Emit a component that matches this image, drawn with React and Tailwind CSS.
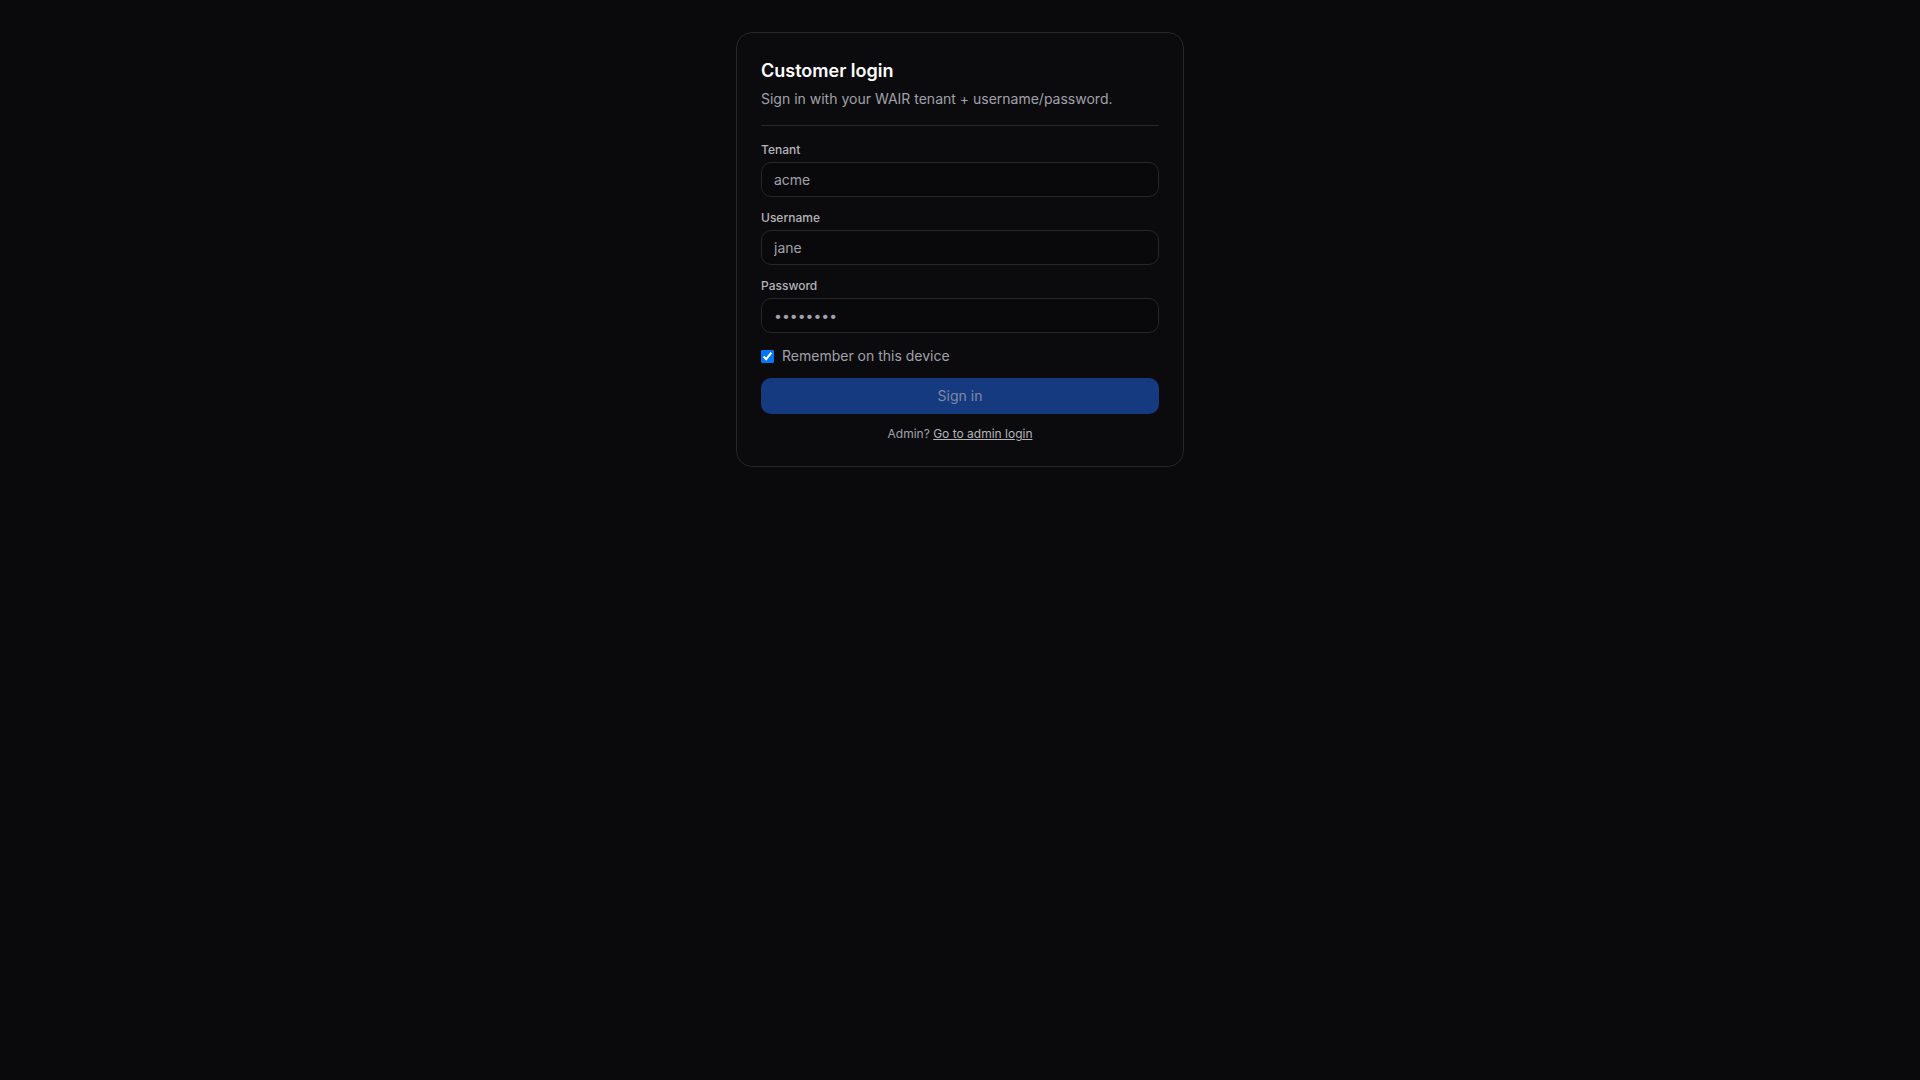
export default function App() {
    const fields = [
        { id: "tenant", label: "Tenant", type: "text", value: "acme" },
        { id: "username", label: "Username", type: "text", value: "jane" },
        { id: "password", label: "Password", type: "password", value: "password" },
    ];

    return (
        <div className="min-h-screen bg-[#0a0a0c] pt-8 font-['Inter',_'Liberation_Sans',_sans-serif] text-[#e4e4e7]">
            <div className="mx-auto w-[448px] rounded-2xl border border-[#27272a] bg-[#0b0b0d] p-6">
                {/* Header */}
                <div className="border-b border-[#27272a] pb-4">
                    <h1 className="text-lg font-semibold leading-7 text-white">Customer login</h1>
                    <p className="mt-1 text-sm leading-5 text-[#a1a1aa]">
                        Sign in with your WAIR tenant + username/password.
                    </p>
                </div>

                <form className="mt-[14px] flex flex-col" onSubmit={(e) => e.preventDefault()}>
                    <div className="flex flex-col gap-[11px]">
                        {fields.map((f) => (
                            <div key={f.id}>
                                <label
                                    htmlFor={f.id}
                                    className="mb-[3px] block text-xs font-medium leading-[19px] text-[#b4b4b9]"
                                >
                                    {f.label}
                                </label>
                                <input
                                    id={f.id}
                                    type={f.type}
                                    defaultValue={f.value}
                                    className="block h-[35px] w-full rounded-[10px] border border-[#27272a] bg-[#09090b] px-3 text-sm text-[#a1a1aa] outline-none"
                                />
                            </div>
                        ))}
                    </div>

                    <label className="mt-[13px] flex h-5 items-center gap-2 text-sm text-[#a1a1aa]">
                        <input type="checkbox" defaultChecked className="h-[13px] w-[13px]" />
                        Remember on this device
                    </label>

                    <button
                        type="submit"
                        className="mt-3 h-9 w-full rounded-[10px] bg-[#163a7f] text-sm text-[#7f8aa3]"
                    >
                        Sign in
                    </button>

                    <p className="mt-3 text-center text-xs leading-4 text-[#a1a1aa]">
                        Admin?{" "}
                        <a href="#" className="text-[#b4b4b9] underline">
                            Go to admin login
                        </a>
                    </p>
                </form>
            </div>
        </div>
    );
}
